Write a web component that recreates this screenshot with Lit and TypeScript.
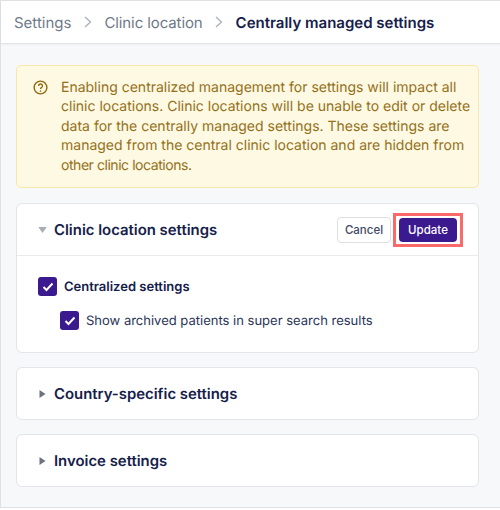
import { LitElement, html, css } from "lit";
import { customElement } from "lit/decorators.js";

const chevron = html`<svg class="sep" width="8" height="12" viewBox="0 0 8 12" fill="none"><path d="M1 1l5.5 5L1 11" stroke="#a9b0b9" stroke-width="1.3"/></svg>`;
const check = html`<svg width="12" height="10" viewBox="0 0 12 10" fill="none"><path d="M1.5 5l3 3 6-6.5" stroke="#fff" stroke-width="2"/></svg>`;

@customElement("app-root")
export class AppRoot extends LitElement {
  static styles = css`
    :host { display: block; width: 500px; height: 510px; overflow: hidden; font-family: Inter, "Liberation Sans", sans-serif; text-rendering: geometricPrecision; }
    .frame { box-sizing: border-box; height: 508px; margin: 0; border: 1px solid #dfe1e5; border-right: none; background: #f7f8f9; }
    .crumbs { box-sizing: border-box; height: 43px; background: #fff; border-bottom: 1px solid #e3e5ea; display: flex; align-items: center; padding: 0 0 0 13px; font-size: 15px; color: #6f7a89; box-shadow: 0 1px 2px rgba(20,30,60,.05); }
    .crumbs .sep { margin: 0 12.5px; }
    .crumbs .mid { letter-spacing: -0.1px; }
    .crumbs b { color: #15204a; font-weight: 600; }
    .content { padding: 21px 21px 0 15px; display: flex; flex-direction: column; gap: 14px; }
    .alert { box-sizing: border-box; height: 123px; background: #fef9e2; border: 1px solid #f8e8a8; border-radius: 5px; padding: 12px 10px 0 16px; display: flex; gap: 13px; color: #94701a; font-size: 14px; line-height: 19.4px; margin-bottom: 1px; white-space: nowrap; }
    .alert svg { flex: none; margin-top: 2px; }
    .tail { letter-spacing: -0.45px; }
    .card { background: #fff; border: 1px solid #e3e5ea; border-radius: 6px; }
    .head { display: flex; align-items: center; height: 51px; box-sizing: border-box; padding: 0 15px 0 21px; }
    .tri { flex: none; width: 16px; display: flex; }
    .title { font-size: 14.9px; font-weight: 600; color: #15204a; flex: 1; }
    .actions { display: flex; gap: 2px; align-items: center; }
    button { font: inherit; font-size: 11.5px; font-weight: 500; height: 24px; border-radius: 4px; box-sizing: border-box; padding: 0; }
    .cancel { width: 54px; height: 26px; background: #fff; border: 1px solid #dcdfe4; color: #3d4866; }
    .hl { border: 3px solid #fb6a6a; padding: 2px 3px; display: flex; }
    .update { width: 58px; background: #3b1a8f; border: none; color: #fff; }
    .body { border-top: 1px solid #e8eaee; padding: 21px 21px 0; display: flex; flex-direction: column; gap: 15px; height: 97px; box-sizing: border-box; }
    .row { display: flex; align-items: center; gap: 7px; font-size: 13px; color: #15204a; height: 19px; }
    .row.main { font-weight: 600; }
    .row.sub { padding-left: 22px; color: #2a3558; }
    .box { flex: none; width: 19px; height: 19px; border-radius: 3px; background: #3b1a8f; display: flex; align-items: center; justify-content: center; }
  `;

  private closed(title: string) {
    return html`<div class="card"><div class="head">
      <span class="tri"><svg width="8" height="10" viewBox="0 0 8 10"><path d="M1.5 1v8L7.5 5z" fill="#6b7480"/></svg></span>
      <span class="title">${title}</span></div></div>`;
  }

  render() {
    return html`<div class="frame">
      <div class="crumbs"><span>Settings</span>${chevron}<span class="mid">Clinic location</span>${chevron}<b>Centrally managed settings</b></div>
      <div class="content">
        <div class="alert">
          <svg width="15" height="15" viewBox="0 0 16 16" fill="none"><circle cx="8" cy="8" r="6.8" stroke="#8f6a0f" stroke-width="1.5"/><path d="M5.9 6.3a2.1 2.1 0 1 1 3.1 1.9c-.7.4-1 .8-1 1.5" stroke="#8f6a0f" stroke-width="1.4"/><circle cx="8" cy="11.7" r=".9" fill="#8f6a0f"/></svg>
          <div>Enabling centralized management for settings will impact all<br>clinic locations. Clinic locations will be unable to edit or delete<br>data for the centrally managed settings. These settings are<br>managed from the central clinic location and are hidden from<br><span class="tail">other clinic locations.</span></div>
        </div>
        <div class="card">
          <div class="head">
            <span class="tri"><svg width="9" height="8" viewBox="0 0 9 8"><path d="M0.3 1h8.4L4.5 7z" fill="#a9aeb6"/></svg></span>
            <span class="title">Clinic location settings</span>
            <div class="actions"><button class="cancel">Cancel</button><div class="hl"><button class="update">Update</button></div></div>
          </div>
          <div class="body">
            <div class="row main"><span class="box">${check}</span>Centralized settings</div>
            <div class="row sub"><span class="box">${check}</span>Show archived patients in super search results</div>
          </div>
        </div>
        ${this.closed("Country-specific settings")}
        ${this.closed("Invoice settings")}
      </div>
    </div>`;
  }
}
